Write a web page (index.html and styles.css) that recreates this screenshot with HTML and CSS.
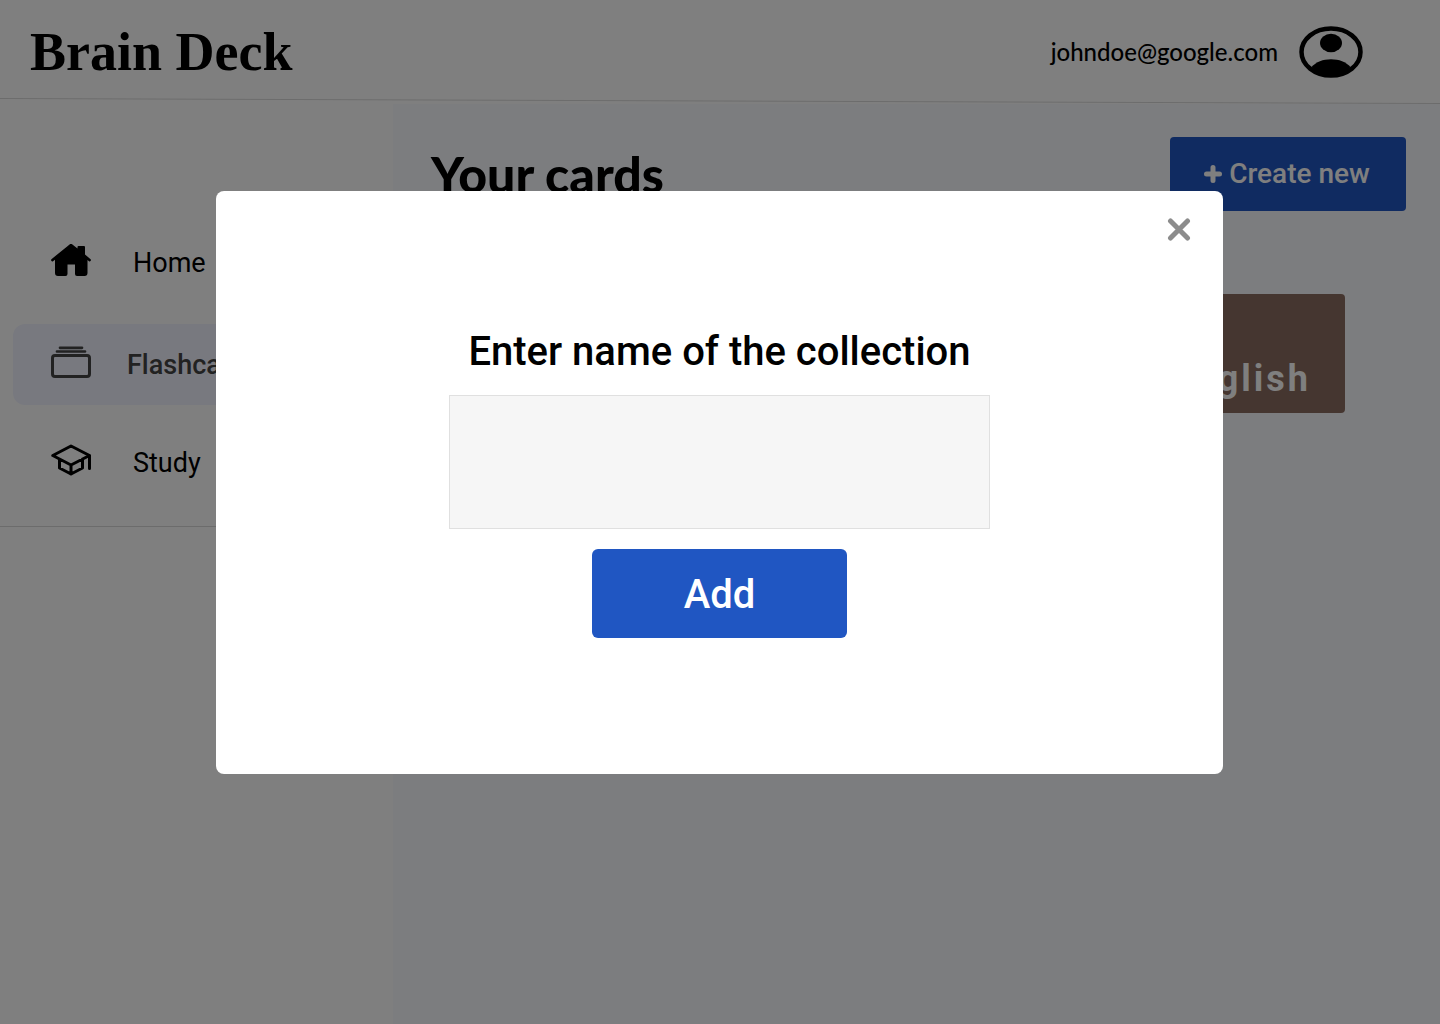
FILE: index.html
```html
<!DOCTYPE html>
<html lang="en">
<head>
<meta charset="utf-8">
<meta name="viewport" content="width=device-width, initial-scale=1">
<title>Brain Deck</title>
<link rel="stylesheet" href="styles.css">
</head>
<body>
<div class="app">
  <header class="header">
    <a class="logo" href="#">Brain Deck</a>
    <a class="account" href="#">
      <span>johndoe@google.com</span>
      <svg class="avatar" viewBox="0 0 64 52" aria-hidden="true">
        <ellipse cx="32" cy="26" rx="29.500" ry="23.500" fill="none" stroke="currentColor" stroke-width="4.500"/>
        <ellipse cx="32" cy="17" rx="11" ry="9.200" fill="currentColor"/>
        <path d="M12.500 41C17 36 24 33.300 32 33.300S47 36 51.500 41C46.500 47 40 50 32 50S17.500 47 12.500 41Z" fill="currentColor"/>
      </svg>
    </a>
    <svg class="header-rule" viewBox="0 0 1440 6" preserveAspectRatio="none" aria-hidden="true">
      <path d="M0 .5L1440 5.500" stroke="#d9d9d9" stroke-width="1"/>
    </svg>
  </header>

  <div class="body">
    <nav class="sidebar">
      <a class="nav-item" href="#">
        <svg class="nav-icon" viewBox="0 0 40 32" aria-hidden="true">
          <path d="M18.300.7a2.500 2.500 0 0 1 3.400 0L26.500 4.500V3a1 1 0 0 1 1-1H33a1 1 0 0 1 1 1v7.500l5.600 4.700a1.300 1.300 0 0 1-1.600 2L36.500 16V29a3 3 0 0 1-3 3H26a2 2 0 0 1-2-2V20.500H16.500V30a2 2 0 0 1-2 2H7a3 3 0 0 1-3-3V15.800L2 17.200a1.300 1.300 0 0 1-1.600-2Z" fill="currentColor"/>
        </svg>
        <span>Home</span>
      </a>
      <a class="nav-item active" href="#" aria-current="page">
        <svg class="nav-icon" viewBox="0 0 40 32" fill="none" stroke="currentColor" stroke-width="3" stroke-linecap="round" aria-hidden="true">
          <path d="M9 1.800H31M6 5.500H34" stroke-width="2.700"/>
          <rect x="1.500" y="9.500" width="37" height="21" rx="2.500"/>
        </svg>
        <span>Flashcards</span>
      </a>
      <a class="nav-item" href="#">
        <svg class="nav-icon" viewBox="0 0 40 32" fill="none" stroke="currentColor" stroke-width="3" stroke-linecap="round" stroke-linejoin="round" aria-hidden="true">
          <path d="M1.800 11.500L20 2L38.500 11.500L20 21ZM38.500 11.500V24.500M8.500 15V24L20 30L31.500 24V15M20 21V30"/>
        </svg>
        <span>Study</span>
      </a>
    </nav>

    <main class="main">
      <div class="toolbar">
        <h1 class="heading">Your cards</h1>
        <button class="create" type="button">
          <svg class="plus" viewBox="0 0 18 18" aria-hidden="true"><path d="M9 2.500V15.500M2.500 9H15.500" stroke="currentColor" stroke-width="5" stroke-linecap="round"/></svg>
          Create new
        </button>
      </div>
      <div class="decks">
        <a class="deck" href="#">English</a>
      </div>
    </main>
  </div>
</div>

<div class="overlay">
  <form class="modal" role="dialog" aria-modal="true" aria-labelledby="modal-title">
    <button class="close" type="button" aria-label="Close">
      <svg viewBox="0 0 24 24" aria-hidden="true"><path d="M3.500 4L20.500 21M20.500 4L3.500 21" stroke="currentColor" stroke-width="5" stroke-linecap="round"/></svg>
    </button>
    <label class="modal-title" id="modal-title" for="collection-name">Enter name of the collection</label>
    <input class="name-input" id="collection-name" type="text">
    <button class="add" type="submit">Add</button>
  </form>
</div>
</body>
</html>
```
FILE: styles.css
```css
* {
  box-sizing: border-box;
}

body {
  margin: 0;
  color: #000;
  background: #fff;
  font-family: Roboto, "Liberation Sans", sans-serif;
}

a {
  color: inherit;
  text-decoration: none;
}

button {
  border: 0;
  font-family: inherit;
  cursor: pointer;
}

.app {
  display: flex;
  flex-direction: column;
  min-height: 100vh;
}

.header {
  position: relative;
  display: flex;
  align-items: center;
  justify-content: space-between;
  height: 104px;
  padding: 0 76px 0 30px;
}

.header-rule {
  position: absolute;
  left: 0;
  bottom: 0;
  width: 100%;
  height: 6px;
}

.logo {
  font: bold 54px/64px "Liberation Serif", serif;
}

.account {
  display: flex;
  align-items: center;
  gap: 20px;
  font: 500 24px/32px Lato, sans-serif;
}

.avatar {
  width: 66px;
  height: 52px;
}

.body {
  display: flex;
  flex: 1;
}

.sidebar {
  display: flex;
  flex-direction: column;
  flex: 0 0 393px;
  align-self: flex-start;
  gap: 19px;
  padding: 120px 13px 21px;
  border-bottom: 1px solid #d9d9d9;
}

.nav-item {
  display: flex;
  align-items: center;
  gap: 42px;
  height: 81px;
  padding: 0 38px 4px;
  border-radius: 12px;
  font-size: 27px;
  line-height: 32px;
}

.nav-item.active {
  gap: 36px;
  padding-bottom: 0;
  color: #444;
  background: #f1f3fe;
  font-weight: 500;
}

.nav-icon {
  width: 40px;
  height: 32px;
  margin-bottom: 5px;
}

.main {
  flex: 1;
  padding: 33px 34px;
  background: #f8faff;
}

.toolbar {
  display: flex;
  align-items: center;
  justify-content: space-between;
}

.heading {
  margin: 0;
  padding-left: 4px;
  font: 900 50px/58px Lato, sans-serif;
}

.create {
  display: flex;
  align-items: center;
  justify-content: center;
  gap: 7px;
  width: 236px;
  height: 74px;
  padding: 0 2px 0 0;
  border-radius: 4px;
  color: #fff;
  background: #2056c2;
  font-size: 28px;
  font-weight: 500;
  line-height: 32px;
}

.plus {
  width: 18px;
  height: 18px;
}

.decks {
  display: flex;
  justify-content: flex-end;
  padding: 83px 61px 0 0;
}

.deck {
  display: flex;
  align-items: flex-end;
  justify-content: flex-end;
  width: 236px;
  height: 119px;
  padding: 14px 34px;
  border-radius: 4px;
  color: #fff;
  background: #8b6d60;
  font-size: 36px;
  font-weight: 700;
  line-height: 40px;
  letter-spacing: 3px;
}

.overlay {
  position: fixed;
  inset: 0;
  display: flex;
  align-items: flex-start;
  justify-content: center;
  padding: 191px 1px 0 0;
  background: rgba(0, 0, 0, 0.5);
}

.modal {
  position: relative;
  display: flex;
  flex-direction: column;
  align-items: center;
  width: 70%;
  padding: 137px 32px 136px;
  border-radius: 8px;
  background: #fff;
}

.close {
  position: absolute;
  top: 26px;
  right: 32px;
  width: 24px;
  height: 24px;
  padding: 0;
  color: #8c8c8c;
  background: none;
}

.close svg {
  display: block;
}

.modal-title {
  margin-bottom: 19px;
  font-size: 40px;
  font-weight: 500;
  line-height: 48px;
}

.name-input {
  width: 541px;
  max-width: 100%;
  height: 134px;
  margin-bottom: 20px;
  padding: 0 24px;
  border: 1px solid #e0e0e0;
  background: #f6f6f6;
  font: inherit;
  font-size: 40px;
}

.add {
  width: 255px;
  height: 89px;
  padding: 2px 0 0;
  border-radius: 6px;
  color: #fff;
  background: #2056c2;
  font-size: 40px;
  font-weight: 500;
  line-height: 48px;
}
```
